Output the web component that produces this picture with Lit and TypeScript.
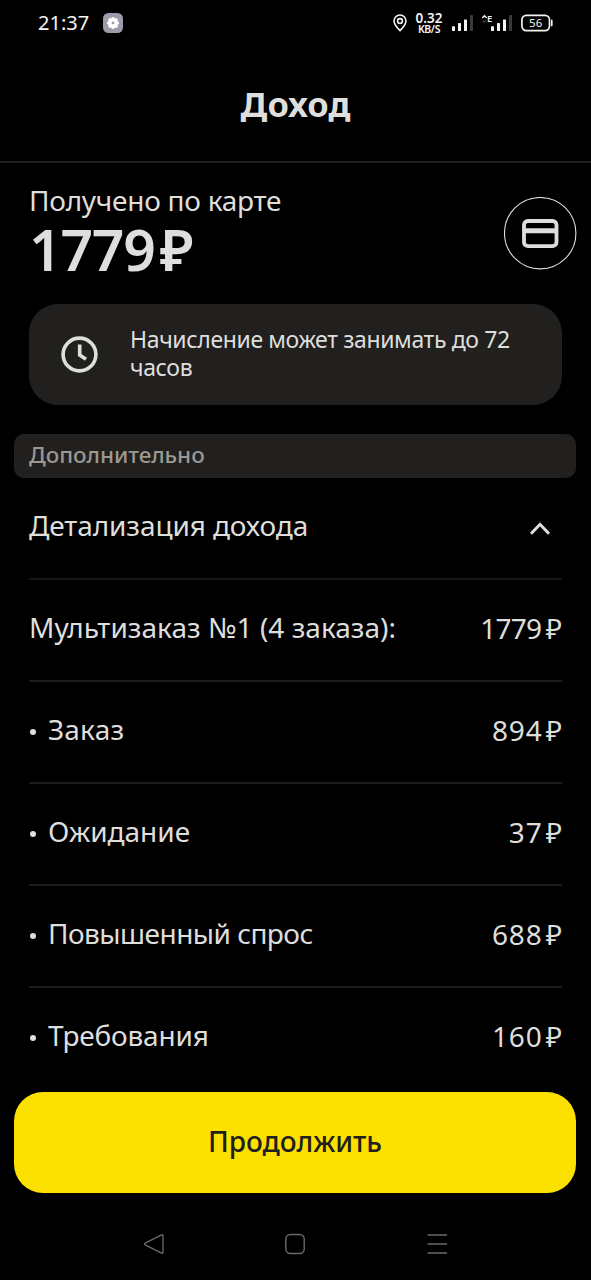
import { LitElement, html, css, svg } from "lit";
import { customElement } from "lit/decorators.js";

interface Row {
  label: string;
  value: string;
  bullet: boolean;
  cls: string;
}

const ROWS: Row[] = [
  { label: "Мультизаказ №1 (4 заказа):", value: "1779", bullet: false, cls: "multi" },
  { label: "Заказ", value: "894", bullet: true, cls: "order" },
  { label: "Ожидание", value: "37", bullet: true, cls: "wait" },
  { label: "Повышенный спрос", value: "688", bullet: true, cls: "surge" },
  { label: "Требования", value: "160", bullet: true, cls: "reqs" },
];

const bars = svg`
  <rect x="0" y="15.2" width="3" height="4.8" rx="0.6" fill="#f4f4f4"/>
  <rect x="6" y="12" width="3" height="8" rx="0.6" fill="#f4f4f4"/>
  <rect x="12" y="8.5" width="3" height="11.5" rx="0.6" fill="#f4f4f4"/>
  <rect x="18" y="4" width="3" height="16" rx="0.6" fill="#3a3a3a"/>`;

@customElement("status-bar")
class StatusBar extends LitElement {
  static styles = css`
    :host { display: flex; align-items: center; height: 46px; padding: 0 38px; box-sizing: border-box; color: #f4f4f4; font-family: "Noto Sans", sans-serif; }
    svg { display: block; flex: none; }
    .time { font-size: 20px; line-height: 24px; letter-spacing: 0; width: 65px; }
    .right { margin-left: auto; display: flex; align-items: center; }
    .speed { display: flex; flex-direction: column; align-items: center; width: 28px; margin: 0 9px 0 8px; font-weight: 600; }
    .rate { font-size: 13.5px; line-height: 11px; }
    .unit { font-size: 10.5px; line-height: 10px; letter-spacing: -0.4px; }
    .sim { margin-right: 9px; }
    .sim2 { margin-right: 9px; }
    .e { font: 600 9.5px "Noto Sans", sans-serif; }
    .pct { font: 400 11.5px "Noto Sans", sans-serif; }
  `;
  render() {
    return html`
      <span class="time">21:37</span>
      <svg width="20" height="20" viewBox="0 0 20 20">
        <rect width="20" height="20" rx="5.5" fill="#9c9ba9"/>
        <g fill="#fff">
          <circle cx="10" cy="10" r="5"/>
          ${[0, 45, 90, 135, 180, 225, 270, 315].map(
            (a) => svg`<circle cx="10" cy="5.5" r="1.6" transform="rotate(${a} 10 10)"/>`
          )}
        </g>
        <circle cx="10" cy="10" r="1.4" fill="#9c9ba9"/>
      </svg>
      <div class="right">
        <svg width="14" height="18" viewBox="0 0 14 18" fill="none" stroke="#f4f4f4" stroke-width="1.6" stroke-linejoin="round">
          <path d="M7 16.6C4 13.6 1 10.6 1 7a6 6 0 0 1 12 0c0 3.600-3 6.600-6 9.600z"/>
          <circle cx="7" cy="7" r="2.400"/>
        </svg>
        <div class="speed"><span class="rate">0.32</span><span class="unit">KB/S</span></div>
        <svg class="sim" width="21" height="24" viewBox="0 0 21 24">${bars}</svg>
        <svg class="sim2" width="30" height="24" viewBox="1 0 30 24">
          <path d="M1.200 7 3.400 4.800l2.200 2.200" fill="none" stroke="#f4f4f4" stroke-width="1.400"/>
          <path d="M1.600 9.500 3.400 11.200l1.800-1.700" fill="none" stroke="#444" stroke-width="1.200"/>
          <text class="e" x="6" y="11.300" fill="#f4f4f4">E</text>
          <g transform="translate(10 0)">${bars}</g>
        </svg>
        <svg width="32" height="18" viewBox="0 0 32 18">
          <rect x="0.900" y="1.400" width="27.600" height="15.200" rx="4.500" fill="none" stroke="#f4f4f4" stroke-width="1.700"/>
          <path d="M30.800 6.400v5.200" stroke="#f4f4f4" stroke-width="1.600" stroke-linecap="round"/>
          <text class="pct" x="14.700" y="13.200" text-anchor="middle" fill="#f4f4f4">56</text>
        </svg>
      </div>`;
  }
}

@customElement("rouble-sum")
class RoubleSum extends LitElement {
  static properties = {
    value: {},
    big: { type: Boolean, reflect: true },
    tight: { type: Boolean, reflect: true },
  };
  declare value: string;
  declare big: boolean;
  declare tight: boolean;
  static styles = css`
    :host { display: flex; font-size: 28px; line-height: 36px; letter-spacing: 0.9px; padding-top: 2px; }
    .sign { letter-spacing: 0; margin-left: 3px; }
    :host([tight]) { letter-spacing: -0.8px; }
    :host([tight]) .sign { margin-left: 4.5px; }
    :host([big]) { font-size: 57px; line-height: 60px; font-weight: 600; letter-spacing: -1.2px; padding-top: 0; }
    :host([big]) .sign { margin-left: 5px; }
  `;
  render() {
    return html`<span>${this.value}</span><span class="sign">₽</span>`;
  }
}

@customElement("app-root")
class AppRoot extends LitElement {
  static styles = css`
    :host { display: flex; flex-direction: column; width: 591px; height: 1280px; overflow: hidden; background: #000; color: #dededc; font-family: "Noto Sans", sans-serif; }
    * { box-sizing: border-box; }
    status-bar { flex: none; }
    svg { display: block; flex: none; }
    .header { height: 117px; flex: none; border-bottom: 2px solid #1e1e1e; display: flex; align-items: center; justify-content: center; padding-top: 1px; }
    .title { margin: 0; font-size: 34.5px; line-height: 44px; font-weight: 700; letter-spacing: 0; }
    .summary { display: flex; height: 141px; flex: none; padding: 0 14px 0 29px; justify-content: space-between; }
    .sums { display: flex; flex-direction: column; padding-top: 19px; }
    .caption { font-size: 28px; line-height: 36px; letter-spacing: -0.25px; white-space: nowrap; }
    .sums rouble-sum { margin-top: 1px; }
    .card { width: 73px; height: 73px; margin-top: 34px; }
    .note { margin: 0 29px; height: 101px; flex: none; border-radius: 29px; background: #21201f; display: flex; align-items: center; padding: 0 32px; gap: 32px; }
    .note p { margin: 0 0 4px; flex: 1; font-size: 23px; line-height: 28px; letter-spacing: -0.36px; white-space: nowrap; }
    .chip { margin: 29px 15px 0 14px; height: 44px; flex: none; border-radius: 10px; background: #21201f; color: #9b9892; padding: 0 15px 3px; display: flex; align-items: center; font-size: 22.5px; font-weight: 500; letter-spacing: -0.06px; }
    .row { margin: 0 29px; height: 102px; flex: none; border-bottom: 2px solid #1c1c1c; display: flex; align-items: center; justify-content: space-between; padding-bottom: 6px; font-size: 28px; line-height: 36px; white-space: nowrap; letter-spacing: -0.1px; }
    .head { border-bottom-color: #161616; }
    .row:last-child { border-bottom: 0; padding-bottom: 8px; }
    .name { display: flex; align-items: center; }
    .multi { letter-spacing: 0.02px; }
    .order { letter-spacing: 0.2px; }
    .wait { letter-spacing: 0; }
    .surge { letter-spacing: -0.53px; }
    .reqs { letter-spacing: -0.2px; }
    .dot { width: 6px; height: 6px; border-radius: 50%; background: #dededc; margin: 5px 12px 0 1px; }
    .list { height: 614px; flex: none; overflow: hidden; }
    .chevron { margin: 6px 10px 0 0; }
    .go { margin: 0 15px 0 14px; height: 101px; flex: none; border: 0; border-radius: 29px; background: #fce000; color: #21201f; font: 500 28px/36px "Noto Sans", sans-serif; letter-spacing: -0.05px; padding: 0 0 3px; }
    .nav { flex: 1; display: flex; align-items: center; justify-content: space-between; padding: 15px 143.5px 0 143px; }
  `;
  render() {
    return html`
      <status-bar></status-bar>
      <header class="header"><h1 class="title">Доход</h1></header>
      <section class="summary">
        <div class="sums">
          <span class="caption">Получено по карте</span>
          <rouble-sum big .value=${"1779"}></rouble-sum>
        </div>
        <svg class="card" viewBox="0 0 73 73" fill="none">
          <circle cx="36.200" cy="36.200" r="35.700" stroke="#dededc" stroke-width="1.100"/>
          <rect x="20" y="24" width="32.500" height="25.200" rx="4" stroke="#dededc" stroke-width="3.800"/>
          <path d="M20 33.800h32.500" stroke="#dededc" stroke-width="5"/>
        </svg>
      </section>
      <section class="note">
        <svg width="37" height="37" viewBox="0 0 37 37" fill="none" stroke="#dededc" stroke-width="3.600">
          <circle cx="18.500" cy="18.500" r="16.400"/>
          <path d="M18.700 8.500v10.500l6.300 4.200"/>
        </svg>
        <p>Начисление может занимать до 72<br />часов</p>
      </section>
      <div class="chip">Дополнительно</div>
      <main class="list">
        <div class="row head">
          <span>Детализация дохода</span>
          <svg class="chevron" width="24" height="14" viewBox="0 0 24 14" fill="none" stroke="#dededc" stroke-width="3">
            <path d="M3 12.700 12 3.300l9 9.400"/>
          </svg>
        </div>
        ${ROWS.map(
          (r) => html`<div class="row">
            <span class="name">${r.bullet ? html`<i class="dot"></i>` : ""}<span class=${r.cls}>${r.label}</span></span>
            <rouble-sum .value=${r.value} .tight=${r.value.length > 3}></rouble-sum>
          </div>`
        )}
      </main>
      <button class="go">Продолжить</button>
      <nav class="nav">
        <svg width="22" height="22" viewBox="0 0 22 22" fill="none" stroke="#6a6a6a" stroke-width="1.300" stroke-linejoin="round">
          <path d="M2.100 10.200 18.600 1.900q1.400-.5 1.400 1v16.200q0 1.500-1.400 1L2.100 11.800q-1.300-.8 0-1.600z"/>
        </svg>
        <svg width="22" height="22" viewBox="0 0 22 22" fill="none" stroke="#6a6a6a" stroke-width="1.400">
          <rect x="1.800" y="1.500" width="18.400" height="19" rx="4.500"/>
        </svg>
        <svg width="22" height="22" viewBox="0 0 22 22" stroke="#6a6a6a" stroke-width="1.600">
          <path d="M1.500 2h19.500M1.500 11h19.500M1.500 20h19.500"/>
        </svg>
      </nav>`;
  }
}
